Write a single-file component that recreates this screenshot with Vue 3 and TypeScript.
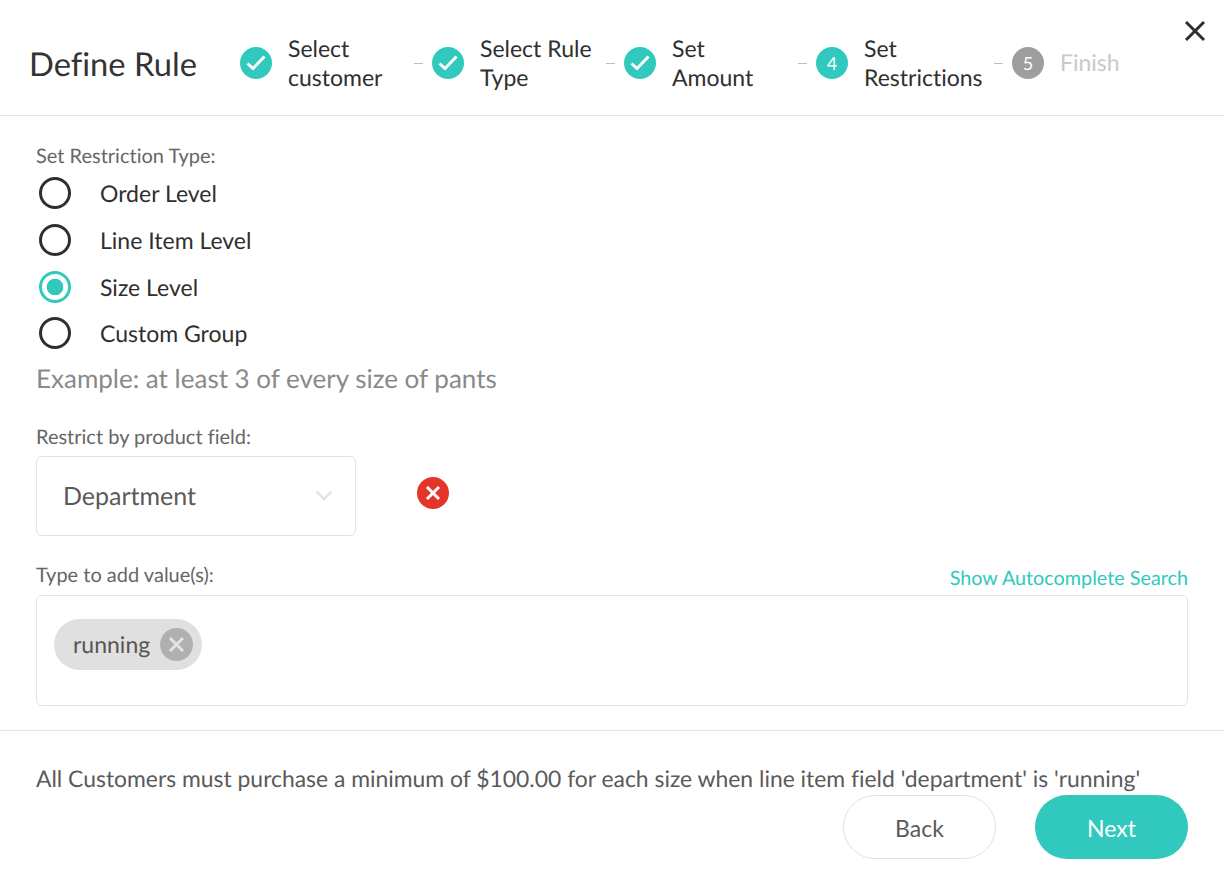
<script setup lang="ts">
interface Step { label: string[]; state: 'done' | 'active' | 'todo'; num: number; width: number }
const steps: Step[] = [
  { label: ['Select', 'customer'], state: 'done', num: 1, width: 192 },
  { label: ['Select Rule', 'Type'], state: 'done', num: 2, width: 192 },
  { label: ['Set', 'Amount'], state: 'done', num: 3, width: 192 },
  { label: ['Set', 'Restrictions'], state: 'active', num: 4, width: 196 },
  { label: ['Finish'], state: 'todo', num: 5, width: 120 },
]
const options = ['Order Level', 'Line Item Level', 'Size Level', 'Custom Group']
const selected = 'Size Level'
</script>

<template>
  <div class="modal">
    <header class="head">
      <h1 class="title">Define Rule</h1>
      <ol class="steps">
        <li v-for="(s, i) in steps" :key="s.num" class="step" :style="{ width: s.width + 'px' }">
          <span class="badge" :class="s.state">
            <svg v-if="s.state === 'done'" width="22" height="18" viewBox="0 0 22 18" fill="none">
              <path d="M2.5 9.5 L8 14.5 L19.5 2.5" stroke="#fff" stroke-width="3" />
            </svg>
            <template v-else>{{ s.num }}</template>
          </span>
          <span class="step-label" :class="s.state">
            <span v-for="l in s.label" :key="l" class="step-line">{{ l }}</span>
          </span>
          <span v-if="i < steps.length - 1" class="dash"></span>
        </li>
      </ol>
      <button class="close" aria-label="Close">
        <svg width="24" height="24" viewBox="0 0 24 24" fill="none">
          <path d="M3 3 L21 21 M21 3 L3 21" stroke="#2f2f2f" stroke-width="3" />
        </svg>
      </button>
    </header>

    <main class="body">
      <div class="label">Set Restriction Type:</div>
      <div class="radios">
        <div v-for="o in options" :key="o" class="radio-row">
          <span class="radio" :class="{ on: o === selected }"></span>
          <span class="radio-text">{{ o }}</span>
        </div>
      </div>
      <p class="example">Example: at least 3 of every size of pants</p>

      <div class="label field-label">Restrict by product field:</div>
      <div class="field-row">
        <div class="select">
          <span>Department</span>
          <svg width="18" height="11" viewBox="0 0 18 11" fill="none">
            <path d="M1.5 1.5 L9 9 L16.5 1.5" stroke="#e2e2e2" stroke-width="2.4" />
          </svg>
        </div>
        <svg class="remove" width="32" height="32" viewBox="0 0 32 32">
          <circle cx="16" cy="16" r="16" fill="#e5352b" />
          <path d="M10 10 L22 22 M22 10 L10 22" stroke="#fff" stroke-width="3" />
        </svg>
      </div>

      <div class="values-head">
        <div class="label">Type to add value(s):</div>
        <a class="link">Show Autocomplete Search</a>
      </div>
      <div class="values">
        <span class="chip">
          running
          <svg width="33" height="33" viewBox="0 0 33 33">
            <circle cx="16.5" cy="16.5" r="16.5" fill="#b0b0b0" />
            <path d="M10 10 L23 23 M23 10 L10 23" stroke="#e4e4e4" stroke-width="3" />
          </svg>
        </span>
      </div>
    </main>

    <footer class="foot">
      <p class="summary">All Customers must purchase a minimum of $100.00 for each size when line item field 'department' is 'running'</p>
      <div class="actions">
        <button class="btn back"><span>Back</span></button>
        <button class="btn next"><span>Next</span></button>
      </div>
    </footer>
  </div>
</template>

<style>
html, body { margin: 0; background: #fff; }
</style>

<style scoped>
.modal {
  width: 1224px;
  height: 888px;
  overflow: hidden;
  background: #fff;
  font-family: Lato, "Open Sans", sans-serif;
  font-variant-ligatures: none;
  text-rendering: geometricPrecision;
  color: #2f2f2f;
  box-sizing: border-box;
}
.head {
  position: relative;
  height: 116px;
  box-sizing: border-box;
  border-bottom: 1px solid #e3e3e3;
  display: flex;
  align-items: center;
  padding: 10px 0 0 29px;
}
.title {
  margin: 2px 0 0;
  width: 211px;
  font-size: 32.7px;
  font-weight: 400;
  line-height: 40px;
  color: #333;
}
.steps {
  list-style: none;
  margin: 0;
  padding: 0;
  display: flex;
  align-items: center;
}
.step {
  position: relative;
  display: flex;
  align-items: center;
  box-sizing: border-box;
}
.badge {
  flex: none;
  width: 32px;
  height: 32px;
  border-radius: 50%;
  display: flex;
  align-items: center;
  justify-content: center;
  color: #fff;
  font-size: 18px;
  background: #31c9be;
}
.badge.todo { background: #9e9e9e; }
.step-label {
  margin-left: 16px;
  font-size: 23px;
  line-height: 29px;
  color: #2f2f2f;
  display: flex;
  flex-direction: column;
}
.step-label.todo { color: #c8c8c8; }
.step-line { white-space: nowrap; }
.dash {
  position: absolute;
  right: 9px;
  top: 50%;
  width: 9px;
  height: 1px;
  background: #bdbdbd;
}
.close {
  position: absolute;
  top: 19px;
  right: 17px;
  padding: 0;
  border: 0;
  background: none;
  display: flex;
}
.body {
  padding: 28px 36px 0;
  height: 615px;
  box-sizing: border-box;
  border-bottom: 1px solid #e3e3e3;
}
.label {
  font-size: 20px;
  line-height: 24px;
  color: #666;
}
.radios {
  margin-top: 2px;
}
.radio-row {
  height: 46.67px;
  display: flex;
  align-items: center;
  padding-left: 3px;
}
.radio {
  flex: none;
  width: 32px;
  height: 32px;
  box-sizing: border-box;
  border: 3px solid #2f2f2f;
  border-radius: 50%;
  background: #fff;
}
.radio.on {
  border-color: #31c9be;
  background: radial-gradient(circle, #31c9be 0 8px, #fff 8.6px);
}
.radio-text {
  margin-left: 29px;
  font-size: 23px;
  color: #2f2f2f;
}
.example {
  margin: 5px 0 0;
  font-size: 26px;
  line-height: 32px;
  color: #8a8a8a;
}
.field-label {
  margin-top: 31px;
}
.field-row {
  margin-top: 7px;
  display: flex;
  align-items: flex-start;
}
.select {
  width: 320px;
  height: 80px;
  box-sizing: border-box;
  border: 1px solid #e3e3e3;
  border-radius: 6px;
  display: flex;
  align-items: center;
  justify-content: space-between;
  padding: 0 22px 0 26px;
  font-size: 25px;
  color: #5a5a5a;
}
.remove {
  margin: 21px 0 0 61px;
}
.values-head {
  margin-top: 27px;
  display: flex;
  justify-content: space-between;
  align-items: flex-end;
}
.link {
  font-size: 19.8px;
  line-height: 24px;
  color: #31c9be;
  transform: translateY(3px);
}
.values {
  margin-top: 8px;
  height: 111px;
  box-sizing: border-box;
  border: 1px solid #e3e3e3;
  border-radius: 6px;
  padding: 23px 17px;
}
.chip {
  display: inline-flex;
  align-items: center;
  height: 51px;
  box-sizing: border-box;
  padding: 0 9px 0 19px;
  border-radius: 26px;
  background: #e0e0e0;
  font-size: 23px;
  color: #555;
  gap: 10px;
}
.foot {
  padding: 33px 36px 0;
}
.summary {
  margin: 0;
  font-size: 22.9px;
  line-height: 28px;
  color: #5a5a5a;
  white-space: nowrap;
}
.actions {
  display: flex;
  justify-content: flex-end;
  gap: 39px;
  margin-top: 3px;
}
.btn {
  width: 153px;
  height: 64px;
  box-sizing: border-box;
  border-radius: 32px;
  font-family: inherit;
  font-size: 23px;
  padding: 2px 0 0;
}
.back {
  background: #fff;
  border: 1px solid #e0e0e0;
  color: #5a5a5a;
}
.next {
  background: #31c9be;
  border: 0;
  color: #fff;
}
</style>
